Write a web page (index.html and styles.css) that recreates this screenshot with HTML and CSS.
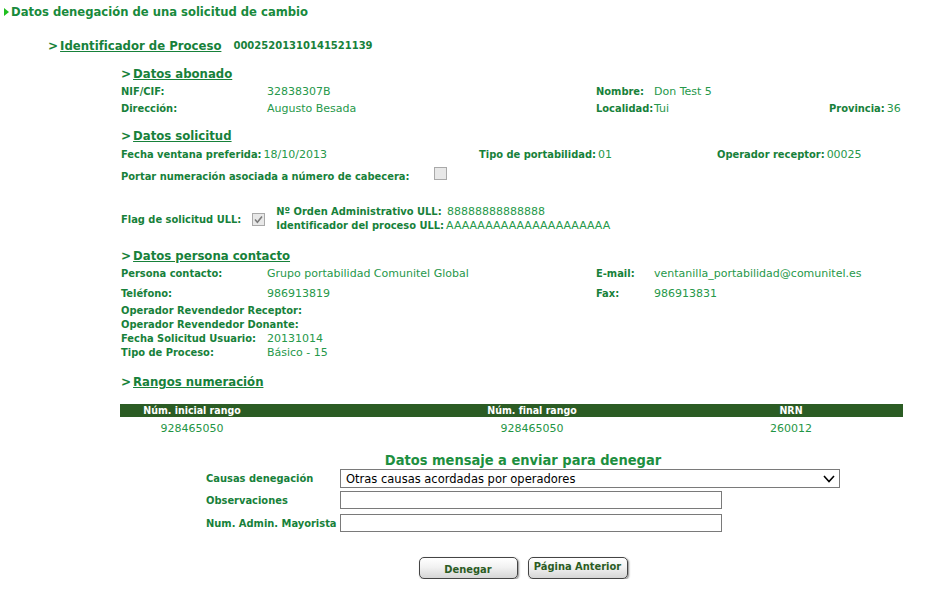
FILE: index.html
```html
<!DOCTYPE html>
<html lang="es">
<head>
<meta charset="utf-8">
<title>Datos denegación</title>
<link rel="stylesheet" href="styles.css">
</head>
<body>
<h1 class="title"><span class="tri"></span>Datos denegación de una solicitud de cambio</h1>

<div class="proc"><span class="gt">&gt;</span> <a class="link">Identificador de Proceso</a><span class="procid">00025201310141521139</span></div>

<div class="sections">
  <div class="sec-head"><span class="gt">&gt;</span> <a class="link">Datos abonado</a></div>
  <div class="grid4 r1">
    <span class="lbl">NIF/CIF:</span><span class="val">32838307B</span>
    <span class="lbl">Nombre:</span><span class="val">Don Test 5</span><span></span>
  </div>
  <div class="grid4">
    <span class="lbl">Dirección:</span><span class="val">Augusto Besada</span>
    <span class="lbl">Localidad:</span><span class="val">Tui</span><span class="right"><span class="lbl">Provincia:</span><span class="val">36</span></span>
  </div>

  <div class="sec-head h2"><span class="gt">&gt;</span> <a class="link">Datos solicitud</a></div>
  <div class="soli">
    <span class="c1"><span class="lbl">Fecha ventana preferida:</span><span class="val">18/10/2013</span></span>
    <span class="c2"><span class="lbl">Tipo de portabilidad:</span><span class="val">01</span></span>
    <span class="c3"><span class="lbl">Operador receptor:</span><span class="val">00025</span></span>
  </div>
  <div class="portar">
    <span class="lbl">Portar numeración asociada a número de cabecera:</span><span class="chk portar-chk"></span>
  </div>
  <div class="flag">
    <span class="lbl">Flag de solicitud ULL:</span>
    <span class="chk flag-chk"><svg viewBox="0 0 13 13" width="13" height="13"><path d="M3 6.5 L5.4 9.2 L10 3.6" fill="none" stroke="#7b7b7b" stroke-width="1.6"/></svg></span>
    <div class="ull">
      <div><span class="lbl">Nº Orden Administrativo ULL:</span><span class="val">&nbsp;88888888888888</span></div>
      <div><span class="lbl">Identificador del proceso ULL:</span><span class="val">AAAAAAAAAAAAAAAAAAAAA</span></div>
    </div>
  </div>

  <div class="sec-head h3"><span class="gt">&gt;</span> <a class="link">Datos persona contacto</a></div>
  <div class="grid4 pc">
    <span class="lbl">Persona contacto:</span><span class="val">Grupo portabilidad Comunitel Global</span>
    <span class="lbl">E-mail:</span><span class="val">ventanilla_portabilidad@comunitel.es</span><span></span>
  </div>
  <div class="grid4 pc tel">
    <span class="lbl">Teléfono:</span><span class="val">986913819</span>
    <span class="lbl">Fax:</span><span class="val">986913831</span><span></span>
  </div>
  <div class="tight">
    <div class="trow"><span class="lbl">Operador Revendedor Receptor:</span></div>
    <div class="trow"><span class="lbl">Operador Revendedor Donante:</span></div>
    <div class="trow grid2"><span class="lbl">Fecha Solicitud Usuario:</span><span class="val">20131014</span></div>
    <div class="trow grid2"><span class="lbl">Tipo de Proceso:</span><span class="val">Básico - 15</span></div>
  </div>

  <div class="sec-head h4"><span class="gt">&gt;</span> <a class="link">Rangos numeración</a></div>
  <div class="rangos">
    <div class="thead">
      <span>Núm. inicial rango</span><span class="mid">Núm. final rango</span><span>NRN</span>
    </div>
    <div class="trow-data">
      <span>928465050</span><span class="mid">928465050</span><span>260012</span>
    </div>
  </div>
</div>

<div class="form">
  <h2 class="form-title">Datos mensaje a enviar para denegar</h2>
  <div class="frow">
    <label class="flbl">Causas denegación</label>
    <div class="select"><span>Otras causas acordadas por operadores</span><svg viewBox="0 0 12 8" width="12" height="8"><path d="M1 1 L6 6.5 L11 1" fill="none" stroke="#000" stroke-width="1.6"/></svg></div>
  </div>
  <div class="frow f2">
    <label class="flbl">Observaciones</label>
    <input class="txt" type="text">
  </div>
  <div class="frow f3">
    <label class="flbl">Num. Admin. Mayorista</label>
    <input class="txt" type="text">
  </div>
  <div class="buttons">
    <button class="btn b1">Denegar</button>
    <button class="btn b2">Página Anterior</button>
  </div>
</div>
</body>
</html>
```

FILE: styles.css
```css
html, body { margin: 0; padding: 0; background: #fff; }
body {
  font-family: "DejaVu Sans", Verdana, sans-serif;
  font-size: 11px;
  color: #1f9545;
  width: 926px;
}
.title {
  margin: 0;
  height: 24px;
  line-height: 24px;
  font-family: "DejaVu Sans Condensed", "DejaVu Sans", sans-serif;
  font-stretch: condensed;
  font-size: 12.9px;
  font-weight: bold;
  color: #188a3c;
  display: flex;
  align-items: center;
}
.tri {
  width: 0; height: 0;
  margin-left: 4px;
  margin-right: 2px;
  border-left: 5px solid #1fbf1f;
  border-top: 4px solid transparent;
  border-bottom: 4px solid transparent;
}
.proc {
  margin-top: 13px;
  height: 18px;
  line-height: 18px;
  padding-left: 48px;
  font-weight: bold;
  font-size: 12px;
  color: #17813a;
  display: flex;
  align-items: center;
}
.gt { font-weight: bold; color: #17813a; white-space: pre; }
.link {
  text-decoration: underline;
  color: #17813a;
  font-weight: bold;
  font-size: 13px;
  font-family: "DejaVu Sans Condensed", "DejaVu Sans", sans-serif;
  font-stretch: semi-condensed;
  margin-left: 2px;
}
.procid { font-size: 10px; margin-left: 12px; color: #17813a; font-weight: bold; }
.sections { margin-left: 121px; width: 782px; }
.sec-head {
  height: 18px;
  line-height: 18px;
  font-size: 12px;
  display: flex;
  align-items: center;
}
.sections > .sec-head:first-child { margin-top: 10px; }
.lbl {
  font-family: "DejaVu Sans Condensed", "DejaVu Sans", sans-serif;
  font-stretch: condensed;
  font-weight: bold;
  color: #17813a;
  white-space: nowrap;
  font-size: 11px;
  margin-right: 2px;
}
.val { color: #26984a; white-space: nowrap; font-size: 11px; }
.grid4 {
  display: grid;
  grid-template-columns: 146px 329px 58px 175px auto;
  height: 17px;
  line-height: 17px;
}
.right { display: flex; }
.h2 { margin-top: 10px; }
.soli { display: flex; height: 17px; line-height: 17px; margin-top: 1px; }
.soli .c1 { width: 358px; }
.soli .c2 { width: 238px; }
.portar { display: flex; align-items: center; height: 17px; line-height: 17px; margin-top: 5px; }
.chk {
  display: inline-block;
  box-sizing: border-box;
  width: 13px; height: 13px;
  border: 1px solid #a9a9a9;
  background: #e8e8e8;
}
.chk svg { display: block; margin: -1px; }
.portar-chk { margin-left: 23px; margin-top: -7px; }
.flag { display: flex; align-items: center; height: 28px; margin-top: 20px; }
.flag-chk { margin-left: 9px; }
.ull { margin-left: 11px; line-height: 14px; }
.h3 { margin-top: 14px; }
.pc { margin-top: 0; }
.tel { margin-top: 3px; }
.tight { margin-top: 2px; }
.trow { height: 14px; line-height: 14px; }
.grid2 { display: grid; grid-template-columns: 146px auto; }
.h4 { margin-top: 13px; }
.rangos { margin-left: -1px; width: 783px; margin-top: 13px; }
.thead {
  display: grid;
  grid-template-columns: 144px 415px 224px;
  height: 13px;
  line-height: 13px;
  background: #2b5c24;
  color: #fff;
  font-family: "DejaVu Sans Condensed", "DejaVu Sans", sans-serif;
  font-stretch: condensed;
  font-weight: bold;
  font-size: 10.5px;
  text-align: center;
}
.trow-data {
  display: grid;
  grid-template-columns: 144px 415px 224px;
  height: 24px;
  line-height: 24px;
  font-size: 11px;
  color: #1f9545;
  text-align: center;
}
.mid { padding-left: 121px; }
.form { margin-left: 206px; width: 634px; }
.form-title {
  margin: 10px 0 0 0;
  height: 18px;
  line-height: 18px;
  text-align: center;
  font-family: "DejaVu Sans Condensed", "DejaVu Sans", sans-serif;
  font-stretch: condensed;
  font-size: 14.5px;
  font-weight: bold;
  color: #1d8f40;
}
.frow { display: flex; align-items: center; height: 19px; }
.flbl {
  width: 134px;
  font-family: "DejaVu Sans Condensed", "DejaVu Sans", sans-serif;
  font-stretch: condensed;
  font-weight: bold;
  color: #17813a;
  font-size: 11px;
  white-space: nowrap;
}
.select {
  box-sizing: border-box;
  width: 500px;
  height: 19px;
  border: 1px solid #7a7a7a;
  display: flex;
  align-items: center;
  justify-content: space-between;
  padding: 0 4px 0 5px;
  font-size: 11.5px;
  color: #000;
}
.f2 { margin-top: 3px; height: 18px; }
.f3 { margin-top: 5px; height: 18px; }
.txt {
  box-sizing: border-box;
  width: 382px;
  height: 18px;
  margin: 0;
  border: 1px solid #7a7a7a;
  padding: 0 2px;
  background: #fff;
}
.buttons {
  display: flex;
  justify-content: center;
  gap: 10px;
  margin-top: 25px;
}
.btn {
  box-sizing: border-box;
  width: 99px;
  height: 22px;
  border: 1px solid #444;
  border-radius: 5px;
  background: linear-gradient(#ffffff 0%, #f2f2f2 45%, #d6d6d6 100%);
  box-shadow: 1px 1px 2px #888;
  font-family: "DejaVu Sans Condensed", "DejaVu Sans", sans-serif;
  font-stretch: condensed;
  font-weight: bold;
  font-size: 11px;
  color: #2b5c24;
  padding: 0;
}
.b1 { padding-top: 3px; }
.b2 { width: 100px; padding-bottom: 3px; }
```
